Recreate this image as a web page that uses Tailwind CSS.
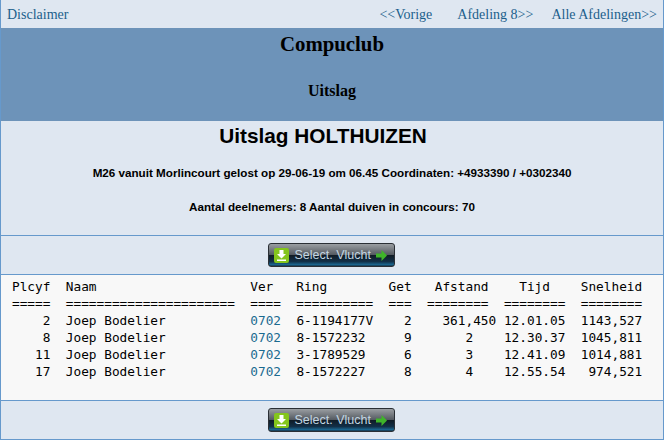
<!DOCTYPE html>
<html><head><script src="https://cdn.jsdelivr.net/npm/@tailwindcss/browser@4"></script></head>
<body class="m-0 w-[664px] h-[440px] overflow-hidden bg-[#dfe7f1] font-['Liberation_Serif',serif] text-black">
<div class="h-[440px] border-x border-b border-[#6699cc] flex flex-col">
<nav class="h-[28px] shrink-0 flex items-center justify-between pl-[6px] pr-[6px] text-[14px] text-[#1c5f8c]"><a>Disclaimer</a><div class="flex"><a>&lt;&lt;Vorige</a><a class="ml-[25px]">Afdeling 8&gt;&gt;</a><a class="ml-[18px]">Alle Afdelingen&gt;&gt;</a></div></nav>
<header class="h-[93px] shrink-0 bg-[#6d93b9] flex flex-col items-center"><h1 class="text-[20.8px] font-bold mt-[4px] leading-[24px]">Compuclub</h1><h2 class="text-[16px] font-bold mt-[25px] leading-[20px]">Uitslag</h2></header>
<section class="h-[115px] shrink-0 border-b border-[#6699cc] flex flex-col items-center font-['Liberation_Sans',sans-serif]"><h3 class="text-[20.8px] font-bold leading-[26px] mt-[2px] pr-[18px]">Uitslag HOLTHUIZEN</h3><p class="text-[11.67px] font-bold mt-[16px] leading-[16px]">M26 vanuit Morlincourt gelost op 29-06-19 om 06.45 Coordinaten: +4933390 / +0302340</p><p class="text-[11.67px] font-bold mt-[18px] leading-[16px]">Aantal deelnemers: 8 Aantal duiven in concours: 70</p></section>
<div class="h-[39px] shrink-0 border-b border-[#6699cc] flex items-center justify-center"><button class="w-[127px] h-[24px] mr-[2px] rounded-[3px] bg-[linear-gradient(to_bottom,#9a9ea2_0%,#555b62_48%,#101c26_52%,#123048_80%,#1b6a94_95%,#14283a_100%)] border border-[#2a2f35] text-[12.5px] text-[#c3d6e2] font-['Liberation_Sans',sans-serif] flex items-center pl-[5px] gap-[6px]"><svg width="15" height="15" viewBox="0 0 15 15"><rect width="15" height="15" rx="2" fill="#84c51c"/><path d="M5.5 2h4v4h2.500l-4.500 4.500L3 6h2.500zM3 11.500h9v1.500H3z" fill="#fff"/></svg><span>Select. Vlucht</span><svg width="11" height="11" viewBox="0 0 11 11" class="-ml-[1px]"><path d="M0 3.500h5.500V0L11 5.500 5.500 11V7.500H0z" fill="#3fb52a"/></svg></button></div>
<pre class="h-[126px] shrink-0 bg-[#f8f8f8] border-b border-[#6699cc] m-0 pl-[11px] pt-[3px] font-['DejaVu_Sans_Mono',monospace] text-[12.77px] leading-[17px]">Plcyf  Naam                    Ver   Ring        Get   Afstand    Tijd    Snelheid
=====  ======================  ====  ==========  ===  ========  ========  ========
    2  Joep Bodelier           <span class="text-[#1a6a90]">0702</span>  6-1194177V    2    361,450 12.01.05  1143,527
    8  Joep Bodelier           <span class="text-[#1a6a90]">0702</span>  8-1572232     9       2    12.30.37  1045,811
   11  Joep Bodelier           <span class="text-[#1a6a90]">0702</span>  3-1789529     6       3    12.41.09  1014,881
   17  Joep Bodelier           <span class="text-[#1a6a90]">0702</span>  8-1572227     8       4    12.55.54   974,521</pre>
<div class="flex-1 flex items-center justify-center"><button class="w-[127px] h-[24px] mr-[2px] rounded-[3px] bg-[linear-gradient(to_bottom,#9a9ea2_0%,#555b62_48%,#101c26_52%,#123048_80%,#1b6a94_95%,#14283a_100%)] border border-[#2a2f35] text-[12.5px] text-[#c3d6e2] font-['Liberation_Sans',sans-serif] flex items-center pl-[5px] gap-[6px]"><svg width="15" height="15" viewBox="0 0 15 15"><rect width="15" height="15" rx="2" fill="#84c51c"/><path d="M5.5 2h4v4h2.500l-4.500 4.500L3 6h2.500zM3 11.500h9v1.500H3z" fill="#fff"/></svg><span>Select. Vlucht</span><svg width="11" height="11" viewBox="0 0 11 11" class="-ml-[1px]"><path d="M0 3.500h5.500V0L11 5.500 5.500 11V7.500H0z" fill="#3fb52a"/></svg></button></div>
</div></body></html>
